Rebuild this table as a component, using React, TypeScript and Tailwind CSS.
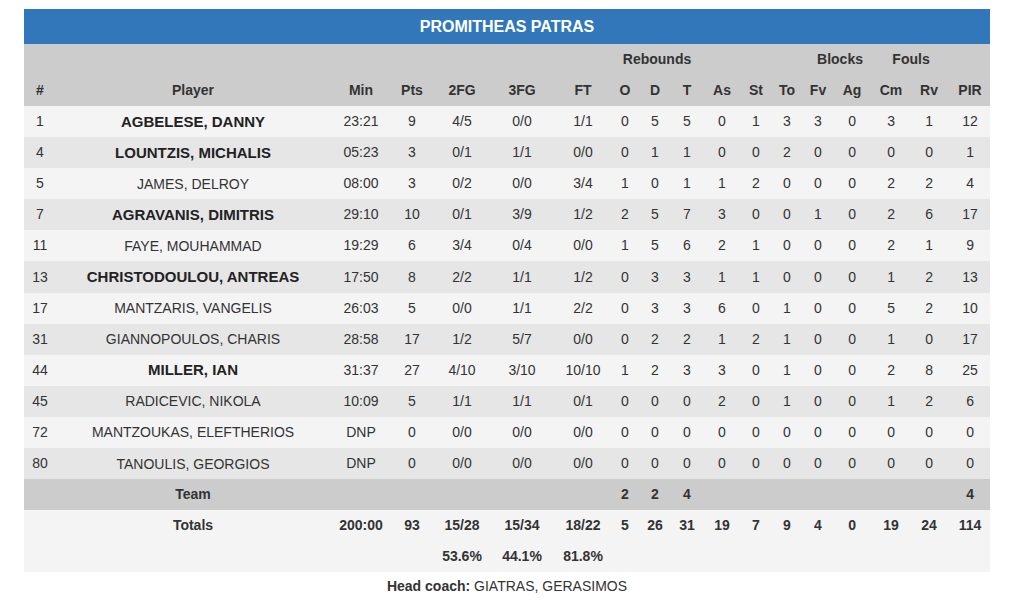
const players = [
  { no: "1", name: "AGBELESE, DANNY", starter: true, s: ["23:21", "9", "4/5", "0/0", "1/1", "0", "5", "5", "0", "1", "3", "3", "0", "3", "1", "12"] },
  { no: "4", name: "LOUNTZIS, MICHALIS", starter: true, s: ["05:23", "3", "0/1", "1/1", "0/0", "0", "1", "1", "0", "0", "2", "0", "0", "0", "0", "1"] },
  { no: "5", name: "JAMES, DELROY", starter: false, s: ["08:00", "3", "0/2", "0/0", "3/4", "1", "0", "1", "1", "2", "0", "0", "0", "2", "2", "4"] },
  { no: "7", name: "AGRAVANIS, DIMITRIS", starter: true, s: ["29:10", "10", "0/1", "3/9", "1/2", "2", "5", "7", "3", "0", "0", "1", "0", "2", "6", "17"] },
  { no: "11", name: "FAYE, MOUHAMMAD", starter: false, s: ["19:29", "6", "3/4", "0/4", "0/0", "1", "5", "6", "2", "1", "0", "0", "0", "2", "1", "9"] },
  { no: "13", name: "CHRISTODOULOU, ANTREAS", starter: true, s: ["17:50", "8", "2/2", "1/1", "1/2", "0", "3", "3", "1", "1", "0", "0", "0", "1", "2", "13"] },
  { no: "17", name: "MANTZARIS, VANGELIS", starter: false, s: ["26:03", "5", "0/0", "1/1", "2/2", "0", "3", "3", "6", "0", "1", "0", "0", "5", "2", "10"] },
  { no: "31", name: "GIANNOPOULOS, CHARIS", starter: false, s: ["28:58", "17", "1/2", "5/7", "0/0", "0", "2", "2", "1", "2", "1", "0", "0", "1", "0", "17"] },
  { no: "44", name: "MILLER, IAN", starter: true, s: ["31:37", "27", "4/10", "3/10", "10/10", "1", "2", "3", "3", "0", "1", "0", "0", "2", "8", "25"] },
  { no: "45", name: "RADICEVIC, NIKOLA", starter: false, s: ["10:09", "5", "1/1", "1/1", "0/1", "0", "0", "0", "2", "0", "1", "0", "0", "1", "2", "6"] },
  { no: "72", name: "MANTZOUKAS, ELEFTHERIOS", starter: false, s: ["DNP", "0", "0/0", "0/0", "0/0", "0", "0", "0", "0", "0", "0", "0", "0", "0", "0", "0"] },
  { no: "80", name: "TANOULIS, GEORGIOS", starter: false, s: ["DNP", "0", "0/0", "0/0", "0/0", "0", "0", "0", "0", "0", "0", "0", "0", "0", "0", "0"] },
];

const cols = ["Min", "Pts", "2FG", "3FG", "FT", "O", "D", "T", "As", "St", "To", "Fv", "Ag", "Cm", "Rv", "PIR"];

const team = ["", "", "", "", "", "2", "2", "4", "", "", "", "", "", "", "", "4"];
const totals = ["200:00", "93", "15/28", "15/34", "18/22", "5", "26", "31", "19", "7", "9", "4", "0", "19", "24", "114"];
const pct = ["", "", "53.6%", "44.1%", "81.8%", "", "", "", "", "", "", "", "", "", "", ""];

const App = () => {
  return (
    <div className="min-h-screen bg-white font-['Liberation_Sans',Arial,sans-serif] text-[14px] text-[#333] pt-[9px]">
      <div className="mx-[24px] w-[966px]">
        <div className="bg-[#3177b9] h-[35px] flex items-center justify-center text-white font-bold text-[16px]">
          PROMITHEAS PATRAS
        </div>
        <table className="table-fixed border-collapse w-[966px] whitespace-nowrap">
          <colgroup>
            <col className="w-[32px]" />
            <col className="w-[274px]" />
            <col className="w-[62px]" />
            <col className="w-[40px]" />
            <col className="w-[60px]" />
            <col className="w-[60px]" />
            <col className="w-[62px]" />
            <col className="w-[22px]" />
            <col className="w-[38px]" />
            <col className="w-[26px]" />
            <col className="w-[44px]" />
            <col className="w-[24px]" />
            <col className="w-[38px]" />
            <col className="w-[24px]" />
            <col className="w-[44px]" />
            <col className="w-[34px]" />
            <col className="w-[42px]" />
            <col className="w-[40px]" />
          </colgroup>
          <thead className="bg-[#cccccc] font-bold">
            <tr className="h-[31px]">
              <th colSpan={7}></th>
              <th colSpan={3} className="text-center font-bold">Rebounds</th>
              <th colSpan={3}></th>
              <th colSpan={2} className="text-center font-bold">Blocks</th>
              <th colSpan={2} className="text-center font-bold pr-[2px]">Fouls</th>
              <th></th>
            </tr>
            <tr className="h-[31px]">
              <th className="text-center font-bold">#</th>
              <th className="text-center font-bold">Player</th>
              {cols.map((c) => (
                <th key={c} className="text-center font-bold">{c}</th>
              ))}
            </tr>
          </thead>
          <tbody>
            {players.map((p, i) => (
              <tr key={p.no} className={`h-[31.1px] ${i % 2 === 0 ? "bg-[#f4f4f4]" : "bg-[#e6e6e6]"}`}>
                <td className="text-center">{p.no}</td>
                <td className={`text-center leading-[20px] ${p.starter ? "font-bold text-[15px] text-[#222]" : ""}`}>{p.name}</td>
                {p.s.map((v, j) => (
                  <td key={j} className="text-center">{v}</td>
                ))}
              </tr>
            ))}
            <tr className="h-[31.1px] bg-[#cccccc] font-bold">
              <td></td>
              <td className="text-center">Team</td>
              {team.map((v, j) => (
                <td key={j} className="text-center">{v}</td>
              ))}
            </tr>
            <tr className="h-[31.1px] bg-[#f4f4f4] font-bold">
              <td></td>
              <td className="text-center">Totals</td>
              {totals.map((v, j) => (
                <td key={j} className="text-center">{v}</td>
              ))}
            </tr>
            <tr className="h-[31.1px] bg-[#f4f4f4] font-bold">
              <td></td>
              <td></td>
              {pct.map((v, j) => (
                <td key={j} className="text-center">{v}</td>
              ))}
            </tr>
          </tbody>
        </table>
        <div className="text-center mt-[4px]">
          <span className="font-bold">Head coach:</span> GIATRAS, GERASIMOS
        </div>
      </div>
    </div>
  );
};

export default App;
